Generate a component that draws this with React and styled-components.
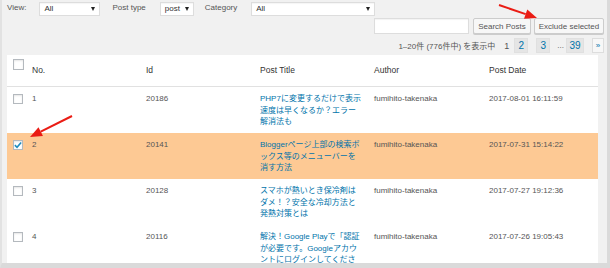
import React from "react";
import styled, { createGlobalStyle } from "styled-components";

const GlobalStyle = createGlobalStyle`
  html, body {
    margin: 0;
    padding: 0;
    background: #f1f1f1;
  }
  * {
    box-sizing: border-box;
  }
`;

const Frame = styled.div`
  position: relative;
  width: 610px;
  height: 268px;
  overflow: hidden;
  background: #f1f1f1;
  border-left: 2px solid #e2e2e2;
  border-right: 3px solid #dadada;
  border-bottom: 5px solid #dadada;
  padding: 0 3px 0 5px;
  font-family: "Liberation Sans", "Noto Sans CJK JP", sans-serif;
  font-size: 8px;
  color: #555;
`;

const FilterRow = styled.div`
  display: flex;
  align-items: center;
  height: 16px;
  padding-top: 2px;
`;

const Label = styled.span`
  color: #555;
  margin-left: ${(p) => p.$gap || 0}px;
  margin-right: ${(p) => p.$after || 0}px;
  line-height: 14px;
  align-self: flex-start;
  margin-top: -1px;
`;

const Select = styled.div`
  position: relative;
  width: ${(p) => p.$width}px;
  height: 14px;
  background: #fff;
  border: 1px solid #ddd;
  box-shadow: inset 0 1px 1px rgba(0, 0, 0, 0.04);
  color: #333;
  padding-left: 4px;
  line-height: 12px;
  font-size: 8px;

  &::after {
    content: "";
    position: absolute;
    right: 4px;
    top: 4px;
    border-left: 2.5px solid transparent;
    border-right: 2.5px solid transparent;
    border-top: 4px solid #222;
  }
`;

const SearchRow = styled.div`
  display: flex;
  justify-content: flex-end;
  align-items: center;
  margin-top: 2px;
  height: 16px;
`;

const SearchInput = styled.div`
  width: 95px;
  height: 16px;
  background: #fff;
  border: 1px solid #ddd;
  box-shadow: inset 0 1px 1px rgba(0, 0, 0, 0.05);
`;

const Button = styled.div`
  width: ${(p) => p.$width}px;
  height: 16px;
  margin-left: ${(p) => p.$gap}px;
  background: #f7f7f7;
  border: 1px solid #ccc;
  border-radius: 2px;
  box-shadow: 0 1px 0 #ccc;
  color: #555;
  font-size: 8px;
  display: flex;
  align-items: center;
  justify-content: center;
`;

const PagerRow = styled.div`
  display: flex;
  justify-content: flex-end;
  align-items: center;
  margin-top: 4px;
  height: 15px;
`;

const PageInfo = styled.span`
  color: #555;
  font-size: 8px;
  margin-right: 9px;
`;

const Current = styled.span`
  color: #555;
  font-size: 9px;
  margin-right: 5px;
`;

const PageBox = styled.span`
  height: 15px;
  min-width: ${(p) => p.$width || 14}px;
  padding: 0 2px;
  margin-left: ${(p) => p.$gap || 0}px;
  background: ${(p) => (p.$light ? "#f7f7f7" : "#e5e5e5")};
  border: 1px solid ${(p) => (p.$light ? "#ddd" : "#e0e0e0")};
  color: #0073aa;
  font-size: ${(p) => (p.$small ? 8 : 10)}px;
  display: flex;
  align-items: center;
  justify-content: center;
`;

const Dots = styled.span`
  color: #555;
  font-size: 8px;
  margin-left: 7px;
  margin-right: 2px;
`;

const Table = styled.div`
  width: 591px;
  margin-top: 2px;
  background: #fff;
`;

const Row = styled.div`
  display: grid;
  grid-template-columns: 25px 114px 114px 114px 115px 109px;
  height: ${(p) => (p.$head ? 32 : 46)}px;
  background: ${(p) => (p.$selected ? "#fdc994" : "#fff")};
  border-bottom: ${(p) => (p.$head ? "1px solid #e1e1e1" : "none")};
`;

const Cell = styled.div`
  padding-top: ${(p) => (p.$head ? 9 : 6)}px;
  line-height: 12px;
  color: ${(p) => (p.$head ? "#333" : "#555")};
  font-size: ${(p) => (p.$head ? 8.5 : 8)}px;
`;

const TitleLink = styled.div`
  color: #0073aa;
  line-height: 11.5px;
  white-space: nowrap;
`;

const CheckCell = styled.div`
  padding-left: 6px;
  padding-top: ${(p) => (p.$head ? 4 : 7)}px;
`;

const Checkbox = styled.span`
  display: flex;
  align-items: center;
  justify-content: center;
  width: ${(p) => (p.$head ? 11 : 10)}px;
  height: ${(p) => (p.$head ? 11 : 10)}px;
  background: #fff;
  border: 1px solid #b4b9be;
  box-shadow: inset 0 1px 2px rgba(0, 0, 0, 0.1);
`;

const ArrowLayer = styled.svg`
  position: absolute;
  left: 0;
  top: 0;
  pointer-events: none;
`;

const rows = [
  {
    no: "1",
    id: "20186",
    title: ["PHP7に変更するだけで表示", "速度は早くなるか？エラー", "解消法も"],
    date: "2017-08-01 16:11:59",
  },
  {
    no: "2",
    id: "20141",
    title: ["Bloggerページ上部の検索ボ", "ックス等のメニューバーを", "消す方法"],
    date: "2017-07-31 15:14:22",
    selected: true,
  },
  {
    no: "3",
    id: "20128",
    title: ["スマホが熱いとき保冷剤は", "ダメ！？安全な冷却方法と", "発熱対策とは"],
    date: "2017-07-27 19:12:36",
  },
  {
    no: "4",
    id: "20116",
    title: ["解決！Google Playで「認証", "が必要です。Googleアカウ", "ントにログインしてくださ"],
    date: "2017-07-26 19:05:43",
  },
];

const Arrow = ({ x1, y1, x2, y2 }) => {
  const a = Math.atan2(y2 - y1, x2 - x1);
  const len = 12;
  const w = 5;
  const bx = x2 - len * Math.cos(a);
  const by = y2 - len * Math.sin(a);
  const px = -Math.sin(a);
  const py = Math.cos(a);
  const pts = `${x2},${y2} ${bx + px * w},${by + py * w} ${bx - px * w},${by - py * w}`;
  return (
    <g>
      <line x1={x1} y1={y1} x2={bx} y2={by} stroke="#ea1c14" strokeWidth="2" />
      <polygon points={pts} fill="#ea1c14" />
    </g>
  );
};

const App = () => {
  return (
    <>
      <GlobalStyle />
      <Frame>
        <FilterRow>
          <Label $after={13}>View:</Label>
          <Select $width={61}>All</Select>
          <Label $gap={12} $after={14}>Post type</Label>
          <Select $width={34}>post</Select>
          <Label $gap={11} $after={14}>Category</Label>
          <Select $width={124}>All</Select>
        </FilterRow>
        <SearchRow>
          <SearchInput />
          <Button $width={58} $gap={4}>Search Posts</Button>
          <Button $width={70} $gap={3}>Exclude selected</Button>
        </SearchRow>
        <PagerRow>
          <PageInfo>1–20件 (776件中) を表示中</PageInfo>
          <Current>1</Current>
          <PageBox>2</PageBox>
          <PageBox $gap={8}>3</PageBox>
          <Dots>...</Dots>
          <PageBox $width={18}>39</PageBox>
          <PageBox $gap={8} $width={12} $light $small>»</PageBox>
        </PagerRow>
        <Table>
          <Row $head>
            <CheckCell $head>
              <Checkbox $head />
            </CheckCell>
            <Cell $head>No.</Cell>
            <Cell $head>Id</Cell>
            <Cell $head>Post Title</Cell>
            <Cell $head>Author</Cell>
            <Cell $head>Post Date</Cell>
          </Row>
          {rows.map((r) => (
            <Row key={r.id} $selected={r.selected}>
              <CheckCell>
                <Checkbox>
                  {r.selected && (
                    <svg width="9" height="8" viewBox="0 0 9 8">
                      <path d="M1 4.2 L3.4 6.6 L8 1.2" fill="none" stroke="#1e8cbe" strokeWidth="1.8" />
                    </svg>
                  )}
                </Checkbox>
              </CheckCell>
              <Cell>{r.no}</Cell>
              <Cell>{r.id}</Cell>
              <Cell>
                {r.title.map((t) => (
                  <TitleLink key={t}>{t}</TitleLink>
                ))}
              </Cell>
              <Cell>fumihito-takenaka</Cell>
              <Cell>{r.date}</Cell>
            </Row>
          ))}
        </Table>
        <ArrowLayer width="610" height="268">
          <Arrow x1={497} y1={5} x2={535} y2={18} />
          <Arrow x1={70} y1={116} x2={28} y2={137} />
        </ArrowLayer>
      </Frame>
    </>
  );
};

export default App;
